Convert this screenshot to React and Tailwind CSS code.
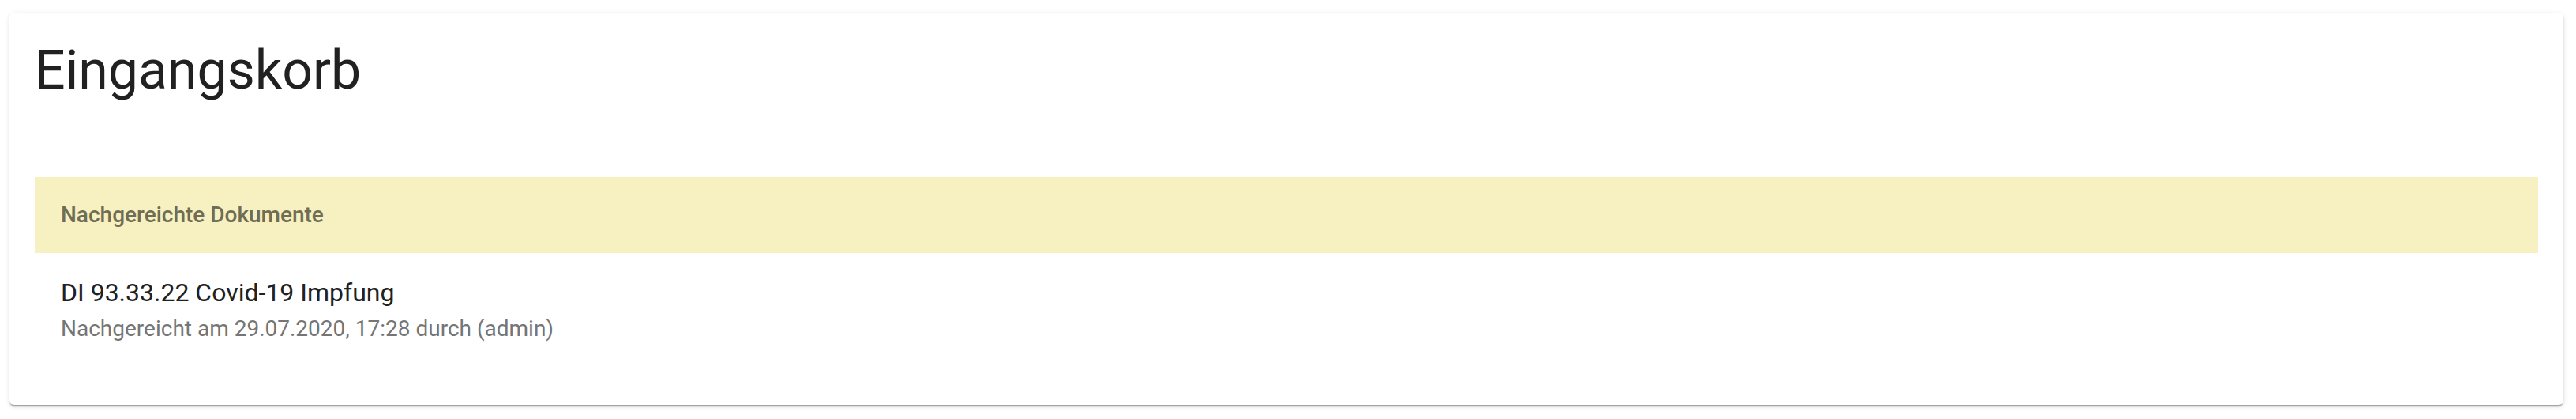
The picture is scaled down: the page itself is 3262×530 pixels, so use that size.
export default function App() {
  return (
    <main className="min-h-[530px] w-full bg-white pt-[16px] pl-[12px] pr-[16px] font-['Roboto',sans-serif]">
      <div className="rounded-[6px] bg-white px-[32px] pt-[32px] pb-[52px] shadow-[0_4px_2px_-2px_rgba(0,0,0,0.2),0_2px_2px_0_rgba(0,0,0,0.14),0_2px_6px_0_rgba(0,0,0,0.12)]">
        <h1 className="text-[68px] leading-[1.235] font-normal text-[#212121]">
          Eingangskorb
        </h1>

        <div className="mt-[92px]">
          <div className="flex h-[96px] items-center bg-[#f7f0c0] px-[33px]">
            <span className="text-[28px] font-medium text-[#706d55]">
              Nachgereichte Dokumente
            </span>
          </div>

          <ul>
            <li className="flex flex-col px-[33px] pt-[26px] pb-[24px]">
              <span className="text-[32px] leading-[48px] text-[#212121]">
                DI 93.33.22 Covid-19 Impfung
              </span>
              <span className="mt-[2px] text-[28px] leading-[40px] text-[#757575]">
                Nachgereicht am 29.07.2020, 17:28 durch (admin)
              </span>
            </li>
          </ul>
        </div>
      </div>
    </main>
  );
}
